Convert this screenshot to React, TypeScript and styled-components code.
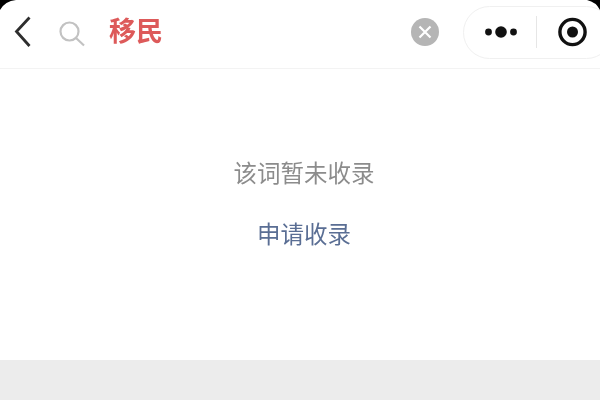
import React from "react";
import styled, { createGlobalStyle } from "styled-components";

const Global = createGlobalStyle`
  html, body { margin: 0; padding: 0; background: #fff; }
  #root { width: 600px; height: 400px; overflow: hidden; }
`;
const Page = styled.div`
  position: relative;
  width: 600px;
  height: 400px;
  display: flex;
  flex-direction: column;
  overflow: hidden;
  background: #fff;
  filter: blur(0.5px);
  font-family: "Noto Sans CJK SC", "Liberation Sans", sans-serif;
`;
const Corner = styled.svg`
  position: absolute;
  top: 0;
  width: 16px;
  height: 10px;
  ${(p: { $right?: boolean }) => (p.$right ? "right: 0;" : "left: 0;")}
`;
const NavBar = styled.header`
  height: 69px;
  flex: none;
  box-sizing: border-box;
  border-bottom: 1px solid #f3f3f3;
  display: flex;
  align-items: center;
  padding: 0 0 6px 14px;
`;
const Back = styled.svg`
  width: 18px;
  height: 32px;
  flex: none;
  margin-top: 2px;
`;
const Search = styled.svg`
  width: 26px;
  height: 28px;
  flex: none;
  margin-left: 27px;
  margin-top: 4px;
`;
const Term = styled.div`
  margin-left: 24px;
  margin-bottom: 2px;
  font-size: 27px;
  line-height: 32px;
  font-weight: 700;
  color: #dd5a5a;
`;
const Clear = styled.svg`
  width: 28px;
  height: 28px;
  flex: none;
  margin-left: auto;
  margin-top: 2px;
`;
const Capsule = styled.div`
  width: 150px;
  height: 53px;
  flex: none;
  box-sizing: border-box;
  margin-left: 24px;
  margin-right: -13px;
  margin-top: 2px;
  border: 1px solid #f0f0f0;
  border-radius: 27px;
  display: flex;
  align-items: center;
  padding-left: 21px;
`;
const Dots = styled.svg`
  width: 34px;
  height: 14px;
  flex: none;
`;
const Divider = styled.div`
  width: 1px;
  height: 32px;
  background: #e6e6e6;
  margin-left: 17px;
`;
const Target = styled.svg`
  width: 30px;
  height: 30px;
  flex: none;
  margin-left: 21px;
`;
const Body = styled.main`
  flex: 1;
  display: flex;
  flex-direction: column;
  align-items: center;
  padding: 87px 0 0 8px;
`;
const Message = styled.div`
  font-size: 23.5px;
  line-height: 32px;
  color: #8c8c8c;
`;
const Apply = styled.div`
  margin-top: 29px;
  font-size: 23.5px;
  line-height: 32px;
  color: #5a6e94;
`;
const Footer = styled.footer`
  height: 40px;
  flex: none;
  background: #ececec;
`;

export default function App() {
  return (
    <Page>
      <Global />
      <NavBar>
        <Back viewBox="0 0 18 32">
          <path d="M15.5 1.5 L2.5 15.5 L15.5 30" fill="none" stroke="#2e2e2e" strokeWidth="2.8" />
        </Back>
        <Search viewBox="0 0 26 28">
          <circle cx="10.5" cy="12.5" r="9" fill="none" stroke="#c2c2c2" strokeWidth="2.2" />
          <path d="M17 19 L25 26.5" stroke="#c2c2c2" strokeWidth="2.2" />
        </Search>
        <Term>移民</Term>
        <Clear viewBox="0 0 28 28">
          <circle cx="14" cy="14" r="14" fill="#b5b5b5" />
          <path d="M8.5 8.5 L19.5 19.5 M19.5 8.5 L8.5 19.5" stroke="#fff" strokeWidth="2.2" />
        </Clear>
        <Capsule>
          <Dots viewBox="0 0 34 14">
            <circle cx="3.5" cy="7" r="3.4" fill="#111" />
            <circle cx="16" cy="7" r="5.8" fill="#111" />
            <circle cx="28.5" cy="7" r="3.4" fill="#111" />
          </Dots>
          <Divider />
          <Target viewBox="0 0 30 30">
            <circle cx="14.5" cy="15" r="12.6" fill="none" stroke="#111" strokeWidth="3.4" />
            <circle cx="14.5" cy="15" r="5.5" fill="#111" />
          </Target>
        </Capsule>
      </NavBar>
      <Body>
        <Message>该词暂未收录</Message>
        <Apply>申请收录</Apply>
      </Body>
      <Footer />
      <Corner viewBox="0 0 16 10">
        <path d="M0 0 H16 Q5 1 0 10 Z" fill="#000" />
      </Corner>
      <Corner $right viewBox="0 0 16 10">
        <path d="M16 0 H3 Q12 2 16 10 Z" fill="#000" />
      </Corner>
    </Page>
  );
}
